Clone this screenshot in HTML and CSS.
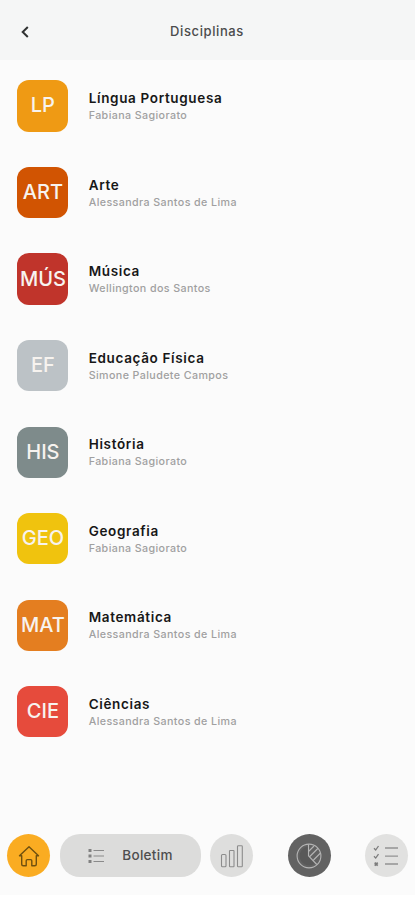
FILE: index.html
```html
<!DOCTYPE html>
<html lang="pt-BR">
<head>
<meta charset="utf-8">
<title>Disciplinas</title>
<link rel="stylesheet" href="styles.css">
</head>
<body>
<div class="app">
  <header class="topbar">
    <button class="back" aria-label="Voltar"><svg width="10" height="14" viewBox="0 0 10 14"><path d="M7.8 2 2.7 7l5.1 5"/></svg></button>
    <h1>Disciplinas</h1>
  </header>
  <main class="list">
    <div class="row"><div class="tile lp">LP</div><div class="info"><h2>Língua Portuguesa</h2><p>Fabiana Sagiorato</p></div></div>
    <div class="row"><div class="tile art">ART</div><div class="info"><h2>Arte</h2><p>Alessandra Santos de Lima</p></div></div>
    <div class="row"><div class="tile mus">MÚS</div><div class="info"><h2>Música</h2><p>Wellington dos Santos</p></div></div>
    <div class="row"><div class="tile ef">EF</div><div class="info"><h2>Educação Física</h2><p>Simone Paludete Campos</p></div></div>
    <div class="row"><div class="tile his">HIS</div><div class="info"><h2>História</h2><p>Fabiana Sagiorato</p></div></div>
    <div class="row"><div class="tile geo">GEO</div><div class="info"><h2>Geografia</h2><p>Fabiana Sagiorato</p></div></div>
    <div class="row"><div class="tile mat">MAT</div><div class="info"><h2>Matemática</h2><p>Alessandra Santos de Lima</p></div></div>
    <div class="row"><div class="tile cie">CIE</div><div class="info"><h2>Ciências</h2><p>Alessandra Santos de Lima</p></div></div>
  </main>
  <nav class="nav">
    <div class="round home"><svg width="22" height="22" viewBox="0 0 22 22"><path d="M1.500 10.800 11 1.800l9.500 9h-2.200v8.400q0 1.500-1.500 1.500h-3v-4.900q0-1.200-1.200-1.200H9.400q-1.200 0-1.200 1.200v4.900h-3q-1.500 0-1.500-1.500v-8.400z"/></svg></div>
    <div class="pill">
      <svg width="17" height="16" viewBox="0 0 17 16"><path d="M5.500 2.500H16M5.500 8H16M5.500 13.500H16"/><path class="dots" d="M.5 1h3v3h-3zM.5 6.500h3v3h-3zM.5 12h3v3h-3z"/></svg>
      <span>Boletim</span>
    </div>
    <div class="round bars"><svg width="24" height="24" viewBox="0 0 24 24"><rect x="1.500" y="10.500" width="4.500" height="12.300" rx="1"/><rect x="9.500" y="6.500" width="4.500" height="16.300" rx=".6"/><rect x="17.500" y="1.800" width="4.800" height="21" rx=".8"/></svg></div>
    <div class="round pie"><svg width="26" height="26" viewBox="0 0 26 26"><circle cx="13" cy="13" r="11.900"/><path class="slice" d="M12 3.500A9.500 9.500 0 1 0 18.500 20.800L12 13.500z"/><path d="M12.500 1.200V12.800l8.300 8.700M12.500 8.500 18 3M13.800 13.500 21.800 5.500M17.500 17l7-7"/></svg></div>
    <div class="round checks"><svg width="26" height="22" viewBox="0 0 26 22"><path d="M12 3h13M12 11.200h13M12 19h13"/><path class="mark" d="m1 3.200 1.700 1.800L5.500 1M1 11.300l1.700 1.800L5.500 9.200"/><path class="cross" d="m1.700 17.700 3 3M4.700 17.700l-3 3"/></svg></div>
  </nav>
</div>
</body>
</html>
```
FILE: styles.css
```css
* { box-sizing: border-box; }
body { margin: 0; background: #fff; font-family: Inter, "Liberation Sans", sans-serif; }
.app { height: 900px; display: flex; flex-direction: column; border-bottom: 5px solid #fff; background: #fbfbfb; overflow: hidden; }
.topbar { height: 60px; flex: none; display: grid; grid-template-columns: 50px 1fr 51px; align-items: center; background: #f5f6f6; padding-top: 3px; }
.back { display: flex; justify-content: center; padding: 0; border: 0; background: none; }
.back svg { fill: none; stroke: #303232; stroke-width: 2; }
h1 { margin: 0; padding-bottom: 2px; text-align: center; font-size: 13px; line-height: 18px; font-weight: 500; letter-spacing: .6px; color: #4b4c4c; }
.list { flex: 1; padding: 20.400px 18px 0 17.400px; display: flex; flex-direction: column; gap: 35.350px; }
.row { display: flex; gap: 20px; height: 51.200px; flex: none; }
.tile { width: 51px; flex: none; border-radius: 12px; display: flex; align-items: center; justify-content: center; padding-bottom: 1px; color: #f7f3ef; font-size: 20px; font-weight: 500; }
.lp { background: #ef9a14; }
.art { background: #d15402; }
.mus { background: #c0342b; }
.ef { background: #bcc2c6; }
.his { background: #7e8b8b; }
.geo { background: #f0c30e; }
.mat { background: #e47e20; }
.cie { background: #e64b3c; }
.info { padding: 8.600px 0 0 .3px; white-space: nowrap; }
h2 { margin: 0; font-size: 13.500px; line-height: 18px; font-weight: 600; letter-spacing: .65px; color: #171717; }
p { margin: 2px 0 0; font-size: 10.700px; line-height: 14px; font-weight: 500; letter-spacing: .4px; color: #a0a0a0; }
.nav { height: 82px; flex: none; display: flex; padding: 21px 7px 0; }
.nav svg { fill: none; }
.round, .pill { height: 43px; display: flex; align-items: center; justify-content: center; flex: none; }
.round { width: 43px; border-radius: 50%; background: #dededd; }
.home { background: #faac22; }
.home svg { stroke: #70500f; stroke-width: 1.400; stroke-linejoin: round; }
.pill { width: 141px; margin: 0 9px 0 10px; border-radius: 20px; background: #dcdcdb; gap: 17px; }
.pill svg { stroke: #8a8a8a; stroke-width: 1.200; }
.pill .dots { fill: #818181; stroke: none; }
.pill span { padding-bottom: 1px; font-size: 13.500px; font-weight: 500; letter-spacing: .3px; color: #4e4e4e; }
.bars svg { stroke: #8c8c8c; stroke-width: 1.100; }
.pie { margin: 0 34px 0 34.500px; background: #626262; }
.pie svg { stroke: #b5b5b5; stroke-width: 1.100; }
.pie .slice { fill: #595959; stroke: none; }
.checks { background: #e1e1e0; }
.checks svg { stroke: #939393; stroke-width: 1.300; }
.checks .mark { stroke: #7c7c7c; }
.checks .cross { stroke: #7c7c7c; stroke-width: 1.700; }
```
